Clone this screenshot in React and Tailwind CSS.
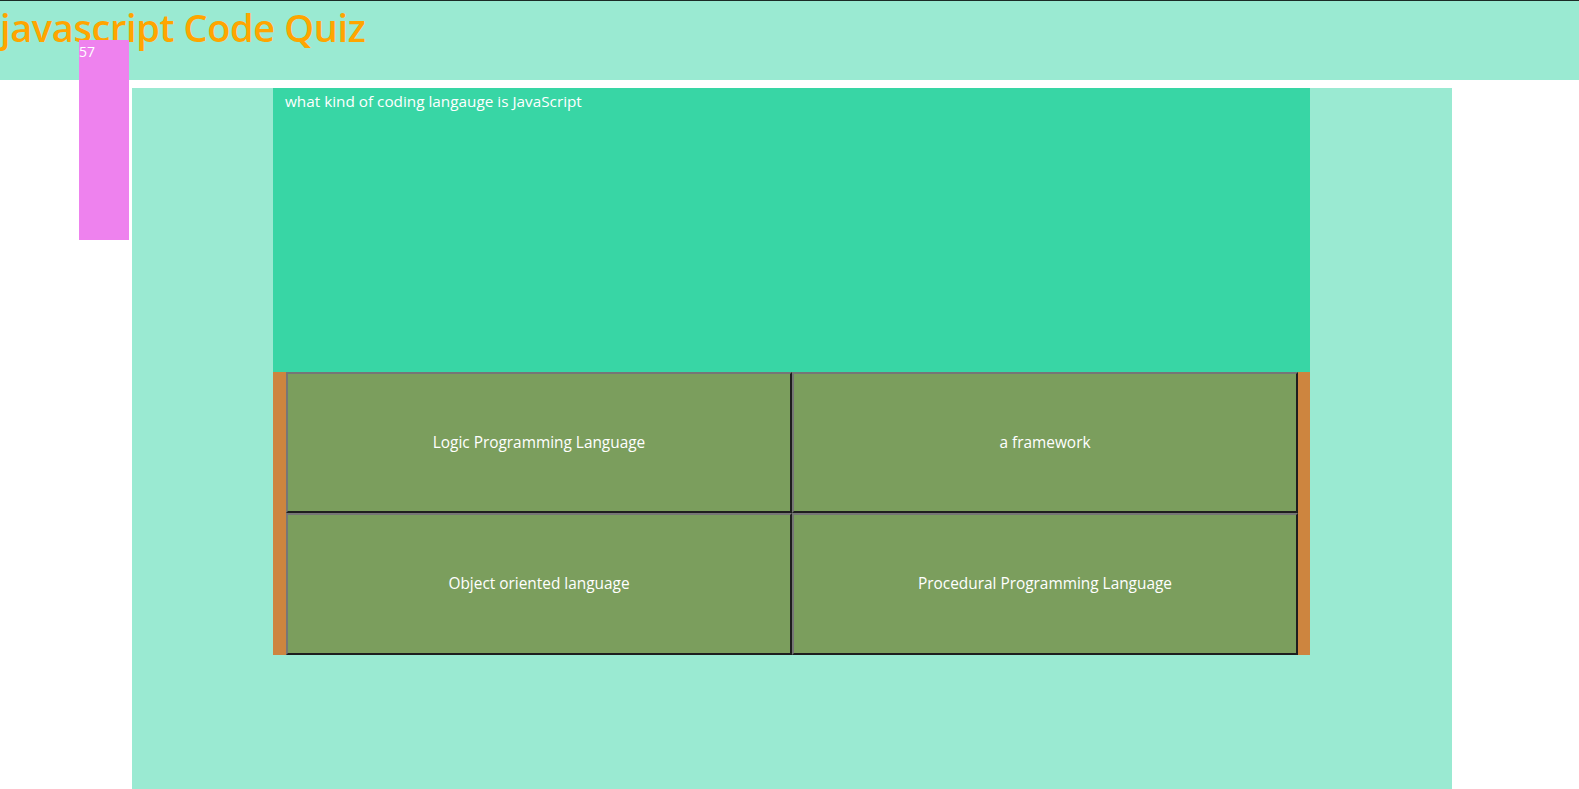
export default function App() {
  const answers = [
    "Logic Programming Language",
    "a framework",
    "Object oriented language",
    "Procedural Programming Language",
  ];
  return (
    <div className="relative min-h-screen bg-white font-['Open_Sans',sans-serif]">
      <header className="h-[80px] border-t border-[#1b2b27] bg-[#9aead2]">
        <h1 className="m-0 text-[38px] font-semibold leading-[52px] tracking-[-0.4px] text-[#ffa500]">
          javascript Code Quiz
        </h1>
      </header>
      <div className="absolute left-[79px] top-[40px] h-[200px] w-[50px] bg-[#ee82ee] text-[14px] leading-[24px] text-white">
        57
      </div>
      <main className="ml-[132px] mt-[8px] h-[710px] w-[1320px] bg-[#9aead2]">
        <div className="ml-[141px] w-[1037px]">
          <div className="h-[284px] bg-[#38d6a5] px-[12px] pt-[2px] text-[15.3px] leading-[22px] text-white">
            what kind of coding langauge is JavaScript
          </div>
          <div className="grid grid-cols-2 grid-rows-[141px_142px] bg-[#cd853f] pl-[13px] pr-[12px]">
            {answers.map((a) => (
              <button
                key={a}
                className="flex items-center justify-center border-2 border-t-[#767676] border-l-[#767676] border-b-[#1e1e1e] border-r-[#1e1e1e] bg-[#7b9e5d] text-[15.4px] text-white"
              >
                {a}
              </button>
            ))}
          </div>
        </div>
      </main>
    </div>
  );
}
